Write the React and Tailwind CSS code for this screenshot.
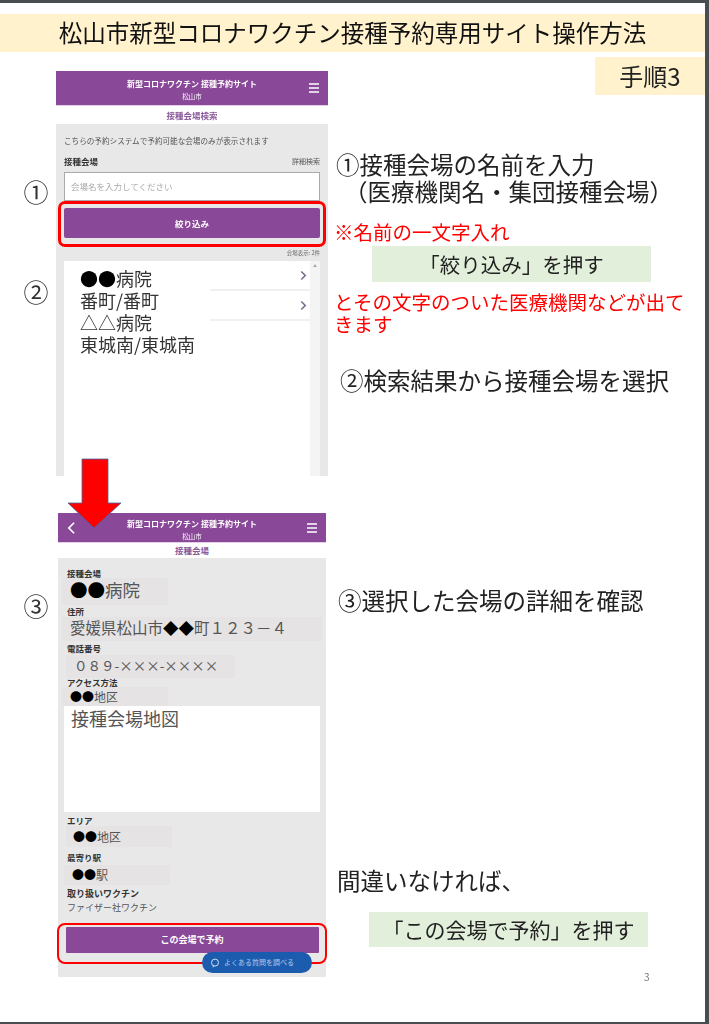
const jp = "font-['Noto_Sans_CJK_JP','Noto_Sans',sans-serif]";

function Hamburger({ className }) {
  return (
    <svg viewBox="0 0 12 12" className={className}>
      <path d="M1 2h10M1 6h10M1 10h10" stroke="#fff" strokeWidth="1.6" fill="none" />
    </svg>
  );
}

function PhoneHeader({ height, back }) {
  return (
    <div className={`flex items-center justify-between bg-[#8a4899] text-white border-b border-[#e4cfe8] px-[8px] ${height}`}>
      <div className="w-[12px]">
        {back && (
          <svg viewBox="0 0 10 16" className="w-[9px] h-[14px] ml-[1px]">
            <path d="M8 2L2 8l6 6" stroke="#fff" strokeWidth="2" fill="none" />
          </svg>
        )}
      </div>
      <div className="flex flex-col items-center pt-[3px]">
        <div className="text-[8px] leading-[12px] font-bold">新型コロナワクチン 接種予約サイト</div>
        <div className="text-[6.5px] leading-[10px] mt-[1px]">松山市</div>
      </div>
      <Hamburger className="w-[12px] h-[12px]" />
    </div>
  );
}

function Label({ children, className = "" }) {
  return <div className={`text-[8.5px] leading-[10px] font-bold text-[#333] ${className}`}>{children}</div>;
}

function Patch({ children, className = "" }) {
  return <div className={`bg-[#e5e3e3] text-[#555] leading-none flex items-center ${className}`}>{children}</div>;
}

function Dots({ children }) {
  return <span className="text-black">{children}</span>;
}

function Chevron() {
  return (
    <svg viewBox="0 0 8 12" className="w-[7px] h-[11px]">
      <path d="M1.5 1.5L6 6l-4.5 4.5" stroke="#7d6a88" strokeWidth="1.8" fill="none" />
    </svg>
  );
}

function SearchPhone() {
  return (
    <div className="w-[272px] h-[405px] flex flex-col">
      <PhoneHeader height="h-[35px]" />
      <div className="h-[18px] bg-white text-center text-[8.5px] leading-[18px] font-bold text-[#8a5a9a]">接種会場検索</div>
      <div className="grow bg-[#e8e8e8] pl-[8px] pr-[8px] pt-[12px] flex flex-col">
        <div className="text-[7.6px] leading-[10px] text-[#555] whitespace-nowrap">こちらの予約システムで予約可能な会場のみが表示されます</div>
        <div className="flex justify-between items-end mt-[10px] h-[10px]">
          <Label>接種会場</Label>
          <div className="text-[7px] leading-[10px] text-[#555]">詳細検索</div>
        </div>
        <div className="mt-[6px] h-[29px] bg-white border border-[#aaa] text-[8.5px] text-[#aaa] flex items-center pl-[6px]">
          会場名を入力してください
        </div>
        <div className="-mx-[6px] h-[46px] border-[3px] border-[#ff0000] rounded-[7px] pt-[4px] px-[3px]">
          <div className="h-[30px] bg-[#8a4899] rounded-[2px] text-white text-[8.5px] font-bold flex items-center justify-center">絞り込み</div>
        </div>
        <div className="text-[5.5px] leading-[8px] text-[#666] text-right mt-[2px]">会場表示: 2件</div>
        <div className="mt-[4px] grow flex">
          <div className="grow bg-white relative flex flex-col">
            <div className="h-[30px] border-b-2 border-[#f0f0f0] flex items-center justify-end pr-[3px]"><Chevron /></div>
            <div className="h-[30px] border-b-2 border-[#f0f0f0] flex items-center justify-end pr-[3px]"><Chevron /></div>
            <div className="absolute left-0 top-[6px] w-[146px] bg-white pl-[16px] text-[18px] leading-[22px] text-[#333]">
              <div><Dots>●●</Dots>病院</div>
              <div className="whitespace-nowrap">番町/番町</div>
              <div>△△病院</div>
              <div className="whitespace-nowrap">東城南/東城南</div>
            </div>
          </div>
          <div className="w-[10px] bg-[#f4f4f4] flex justify-center pt-[3px]">
            <div className="w-0 h-0 border-x-[2px] border-x-transparent border-b-[3px] border-b-[#aaa]" />
          </div>
        </div>
      </div>
    </div>
  );
}

function DetailPhone() {
  return (
    <div className="relative w-[268px] h-[464px] ml-[2px] flex flex-col">
      <PhoneHeader height="h-[30px]" back />
      <div className="h-[15px] bg-white text-center text-[8.5px] leading-[15px] font-bold text-[#8a5a9a]">接種会場</div>
      <div className="grow bg-[#e8e8e8] flex flex-col pt-[10px]">
        <Label className="ml-[9px]">接種会場</Label>
        <Patch className="ml-[4px] w-[106px] h-[27px] text-[17.5px] pl-[8px] pb-[4px]"><Dots>●●</Dots>病院</Patch>
        <Label className="ml-[9px] mt-[1px]">住所</Label>
        <Patch className="ml-[4px] w-[260px] h-[24px] text-[15.5px] pl-[8px] pb-[3px] whitespace-nowrap mt-[1px]">愛媛県松山市<Dots>◆◆</Dots>町１２３－４</Patch>
        <Label className="ml-[9px] mt-[2px]">電話番号</Label>
        <Patch className="ml-[8px] w-[169px] h-[23px] text-[13.5px] pl-[8px] pb-[1px] whitespace-nowrap mt-[2px]">０８９-×××-××××</Patch>
        <Label className="ml-[9px] -mt-[1px]">アクセス方法</Label>
        <Patch className="ml-[4px] w-[106px] h-[19px] text-[12px] pl-[8px]"><Dots>●●</Dots>地区</Patch>
        <div className="ml-[6px] w-[256px] h-[106px] bg-white text-[18px] leading-[24px] text-[#555] pl-[7px]">接種会場地図</div>
        <Label className="ml-[9px] mt-[3px]">エリア</Label>
        <Patch className="ml-[8px] w-[106px] h-[21px] text-[12px] pl-[7px] mt-[1px]"><Dots>●●</Dots>地区</Patch>
        <Label className="ml-[9px] mt-[5px]">最寄り駅</Label>
        <Patch className="ml-[6px] w-[106px] h-[20px] text-[12px] pl-[8px] mt-[3px]"><Dots>●●</Dots>駅</Patch>
        <div className="ml-[9px] mt-[3px] text-[9px] leading-[11px] font-bold text-[#333]">取り扱いワクチン</div>
        <div className="ml-[9px] mt-[3px] text-[9px] leading-[11px] text-[#555]">ファイザー社ワクチン</div>
        <div className="-ml-[1px] w-[270px] h-[41px] mt-[10px] border-[2.5px] border-[#ff0000] rounded-[8px] pt-[2px] px-[6.5px]">
          <div className="h-[26px] bg-[#8a4899] rounded-[1px] text-white text-[9px] font-bold flex items-center justify-center">この会場で予約</div>
        </div>
      </div>
      <div className="absolute left-[144px] top-[439px] w-[110px] h-[21px] rounded-full bg-[#1c5cae] text-[#b4c8e6] text-[7px] flex items-center pl-[8px] gap-[4px] whitespace-nowrap">
        <svg viewBox="0 0 12 12" className="w-[10px] h-[10px] shrink-0">
          <circle cx="6" cy="5.5" r="4.2" stroke="#d5e0f0" strokeWidth="1.2" fill="none" />
          <path d="M3.5 9.5L3 11.5l2.5-1.2" fill="#d5e0f0" />
        </svg>
        よくある質問を調べる
      </div>
    </div>
  );
}

function Circled({ children, className = "" }) {
  return <div className={`text-[25px] leading-[30px] text-[#333] text-center ${className}`}>{children}</div>;
}

function RedArrow() {
  return (
    <svg viewBox="0 0 55 72" className="absolute left-[67px] top-[458px] w-[55px] h-[72px]">
      <path d="M15 1h26v44h13L27 70 1 45h14z" fill="#ff0000" stroke="#3f6aa8" strokeWidth="0.8" />
    </svg>
  );
}

export default function App() {
  return (
    <div className={`relative w-[709px] h-[1024px] bg-white overflow-hidden ${jp}`}>
      <div className="blur-[0.35px]">
        <div className="pt-[14px] pr-[4px]">
          <div className="h-[38px] bg-[#fff2cc] text-center text-[23.5px] leading-[36px] text-[#111] whitespace-nowrap">松山市新型コロナワクチン接種予約専用サイト操作方法</div>
        </div>

        <div className="flex">
          <div className="w-[56px] flex flex-col items-center pl-[16px]">
            <Circled className="mt-[124px]">①</Circled>
            <Circled className="mt-[70px]">②</Circled>
            <Circled className="mt-[284px]">③</Circled>
          </div>

          <div className="w-[272px] pt-[19px] flex flex-col gap-[37px]">
            <SearchPhone />
            <DetailPhone />
          </div>

          <div className="w-[377px] pl-[8px] text-[#222] flex flex-col">
            <div className="self-end mt-[5px] w-[110px] h-[38px] bg-[#fff2cc] text-[24px] leading-[38px] text-center">手順3</div>
            <div className="mt-[55px] text-[23.5px] leading-[28px] whitespace-nowrap">①接種会場の名前を入力</div>
            <div className="text-[23.5px] leading-[27px] whitespace-nowrap pl-[8px]">（医療機関名・集団接種会場）</div>
            <div className="mt-[16px] text-[19.5px] leading-[22px] text-[#ff0000] -ml-[2px] whitespace-nowrap">※名前の一文字入れ</div>
            <div className="mt-[3px] ml-[36px] w-[279px] h-[36px] bg-[#e2efda] text-[20.5px] leading-[36px] text-center whitespace-nowrap">「絞り込み」を押す</div>
            <div className="mt-[9px] -ml-[2px] w-[365px] text-[19.5px] leading-[22px] text-[#ff0000]">とその文字のついた医療機関などが出てきます</div>
            <div className="mt-[30px] ml-[4px] text-[23.5px] leading-[30px] whitespace-nowrap">②検索結果から接種会場を選択</div>
            <div className="mt-[190px] ml-[2px] text-[23.5px] leading-[30px] whitespace-nowrap">③選択した会場の詳細を確認</div>
            <div className="ml-[1px] mt-[250px] text-[23.5px] leading-[30px] whitespace-nowrap">間違いなければ、</div>
            <div className="mt-[17px] ml-[33px] w-[279px] h-[35px] bg-[#e2efda] text-[21px] leading-[35px] text-center whitespace-nowrap">「この会場で予約」を押す</div>
            <div className="mt-[24px] ml-[308px] text-[10px] leading-[12px] text-[#777]">3</div>
          </div>
        </div>
      </div>

      <RedArrow />

      <div className="absolute inset-x-0 top-0 h-[3px] bg-[#4a4d50]" />
      <div className="absolute right-0 top-0 bottom-0 w-[4px] bg-[#4a4d50]" />
      <div className="absolute inset-x-0 bottom-0 h-[2px] bg-[#4a4d50]" />
    </div>
  );
}
